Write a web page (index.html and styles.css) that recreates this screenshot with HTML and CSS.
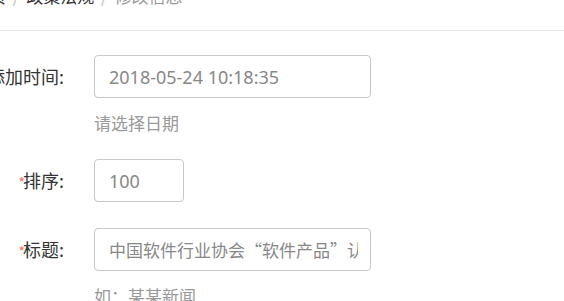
FILE: index.html
```html
<!DOCTYPE html>
<html lang="zh-CN">
<head>
    <meta charset="UTF-8">
    <meta name="viewport" content="width=device-width, initial-scale=1.0">
    <title>修改信息</title>
    <link rel="stylesheet" href="styles.css">
</head>
<body>
    <div class="crumb-bar">
        <span class="crumb">首页</span>
        <span class="sep">/</span>
        <span class="crumb">政策法规</span>
        <span class="sep">/</span>
        <span class="crumb current">修改信息</span>
    </div>

    <form class="edit-form">
        <div class="form-row">
            <label class="form-label">添加时间:</label>
            <div class="form-field">
                <input type="text" class="form-input num wide" value="2018-05-24 10:18:35">
                <div class="form-tip">请选择日期</div>
            </div>
        </div>

        <div class="form-row">
            <label class="form-label required">排序:</label>
            <div class="form-field">
                <input type="text" class="form-input num narrow" value="100">
            </div>
        </div>

        <div class="form-row">
            <label class="form-label required">标题:</label>
            <div class="form-field">
                <input type="text" class="form-input wide" value="中国软件行业协会“软件产品”认证企业名单公示">
                <div class="form-tip">如：某某新闻</div>
            </div>
        </div>
    </form>
</body>
</html>
```

FILE: styles.css
```css
body {
    font-family: "Noto Sans CJK SC", "Noto Sans", sans-serif;
    background: #fff;
    color: #333;
    margin: 0;
    padding: 0;
    overflow: hidden;
}

.crumb-bar {
    margin-top: -16px;
    margin-left: -28px;
    line-height: 24px;
    padding-bottom: 22px;
    font-size: 17px;
    border-bottom: 1px solid #e8e8e8;
    white-space: nowrap;
}

.crumb {
    color: #333;
}

.crumb.current {
    color: #999;
}

.sep {
    color: #c0c0c0;
    margin: 0 3px;
}

.edit-form {
    margin-top: 24px;
    margin-left: -34px;
}

.form-row {
    display: flex;
    margin-bottom: 24px;
}

.form-label {
    box-sizing: border-box;
    width: 128px;
    padding-right: 30px;
    text-align: right;
    line-height: 43px;
    font-size: 18px;
    color: #333;
    flex-shrink: 0;
}

.form-label.required::before {
    content: "*";
    color: #f56c6c;
    font-size: 14px;
    margin-right: -2px;
}

.form-input {
    box-sizing: border-box;
    height: 43px;
    padding: 0 12px 0 14px;
    font-family: inherit;
    font-size: 17px;
    color: #888;
    border: 1px solid #c8c8cc;
    border-radius: 4px;
    background: #fff;
    outline: none;
}

.form-input.num {
    font-family: "Noto Sans", "Noto Sans CJK SC", sans-serif;
    font-size: 18px;
}

.form-input.wide {
    width: 277px;
}

.form-input.narrow {
    width: 90px;
}

.form-tip {
    padding: 15px 0 2px;
    line-height: 20px;
    font-size: 17px;
    color: #999;
}
```
